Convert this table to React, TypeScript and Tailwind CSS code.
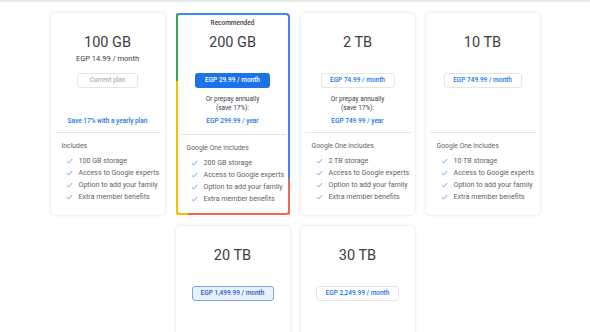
import React from "react";

type Plan = {
  size: string;
  price?: string;
  btn: string;
  variant: "current" | "primary" | "outline" | "hover";
  btnW: string;
  prepay?: string;
  save?: boolean;
  includes?: string;
  recommended?: boolean;
};

const Check = () => (
  <svg width="7" height="6" viewBox="0 0 7 6" className="shrink-0">
    <path d="M0.8 3.2 L2.6 4.9 L6.2 1" fill="none" stroke="#4285f4" strokeWidth="0.8" />
  </svg>
);

function Button({ p }: { p: Plan }) {
  const base =
    "h-[15px] rounded-[3px] flex items-center justify-center text-[6.5px] font-medium leading-none mx-auto";
  if (p.variant === "current")
    return <div className={`${base} ${p.btnW} border border-[#e3e5e8] text-[#b0b4b9] bg-white`}>{p.btn}</div>;
  if (p.variant === "primary")
    return <div className={`${base} ${p.btnW} bg-[#1a73e8] text-white`}>{p.btn}</div>;
  if (p.variant === "hover")
    return <div className={`${base} ${p.btnW} border border-[#7fa3e0] bg-[#e8f0fe] text-[#1a5fc8]`}>{p.btn}</div>;
  return <div className={`${base} ${p.btnW} border border-[#e3e5e8] text-[#1a73e8] bg-white`}>{p.btn}</div>;
}

function Card({ p, row2 }: { p: Plan; row2?: boolean }) {
  const features = p.includes
    ? [`${p.size} storage`, "Access to Google experts", "Option to add your family", "Extra member benefits"]
    : [];
  return (
    <div
      className={`relative w-[114px] rounded-[4px] bg-white border-2 flex flex-col ${
        p.recommended
          ? "border-t-[#4285f4] border-r-[#4285f4] border-b-[#ee675c] border-l-[#fbbc04] pb-[8px]"
          : "border-transparent shadow-[0_0_3px_rgba(0,0,0,0.16)] pb-[10px]"
      } ${row2 ? "h-[140px]" : ""}`}
    >
      {p.recommended && (
        <>
          <span className="absolute left-[-2px] top-[-2px] w-[2px] h-[68px] bg-[#34a853] rounded-tl-[4px]" />
          <span className="absolute right-[-2px] bottom-[-2px] w-[2px] h-[36px] bg-[#ee675c] rounded-br-[4px]" />
          <span className="absolute left-[-2px] bottom-[-2px] w-[12px] h-[2px] bg-[#fbbc04] rounded-bl-[4px]" />
        </>
      )}
      <div className={`h-[58px] flex flex-col items-center ${p.recommended ? "pt-[4px]" : "pt-[19px]"}`}>
        {p.recommended && (
          <div className="h-[8px] leading-[8px] text-[6.5px] font-medium text-[#3c4043]">Recommended</div>
        )}
        <div className={`text-[14.5px] leading-[18px] text-[#3c4043] ${p.recommended ? "mt-[7px]" : ""}`}>
          {p.size}
        </div>
        {p.price && <div className="mt-[2px] text-[7.5px] leading-[10px] text-[#3c4043]">{p.price}</div>}
      </div>
      <Button p={p} />
      {!row2 && (
        <>
          <div className="h-[44px] flex flex-col justify-end items-center pb-[6.5px] text-center">
            {p.prepay && (
              <>
                <div className="text-[6.5px] leading-[9px] text-[#3c4043]">Or prepay annually</div>
                <div className="text-[6.5px] leading-[9px] text-[#3c4043]">(save 17%):</div>
                <div className="mt-[4px] text-[6.5px] leading-[9px] font-medium text-[#1a73e8]">{p.prepay}</div>
              </>
            )}
            {p.save && (
              <div className="text-[6.5px] leading-[9px] font-medium text-[#1a73e8]">Save 17% with a yearly plan</div>
            )}
          </div>
          <div className={`h-px bg-[#e3e5e8] mx-[2px] ${p.recommended ? "mt-[2px]" : ""}`} />
          <div className="px-[9px]">
            <div className="mt-[9px] text-[6.8px] leading-[9px] text-[#5f6368]">{p.includes}</div>
            <div className="mt-[4px] flex flex-col">
              {features.map((f) => (
                <div key={f} className="h-[12px] flex items-center pl-[4px] gap-[6px] text-[7.1px] text-[#5f6368] whitespace-nowrap">
                  <Check />
                  <span>{f}</span>
                </div>
              ))}
            </div>
          </div>
        </>
      )}
    </div>
  );
}

const plans: Plan[] = [
  { size: "100 GB", price: "EGP 14.99 / month", btn: "Current plan", variant: "current", btnW: "w-[61px]", save: true, includes: "Includes" },
  { size: "200 GB", btn: "EGP 29.99 / month", variant: "primary", btnW: "w-[75px]", prepay: "EGP 299.99 / year", includes: "Google One includes", recommended: true },
  { size: "2 TB", btn: "EGP 74.99 / month", variant: "outline", btnW: "w-[74px]", prepay: "EGP 749.99 / year", includes: "Google One includes" },
  { size: "10 TB", btn: "EGP 749.99 / month", variant: "outline", btnW: "w-[78px]", includes: "Google One includes" },
];

const plans2: Plan[] = [
  { size: "20 TB", btn: "EGP 1,499.99 / month", variant: "hover", btnW: "w-[82px]" },
  { size: "30 TB", btn: "EGP 2,249.99 / month", variant: "outline", btnW: "w-[83px]" },
];

export default function App() {
  return (
    <div className="min-h-[332px] bg-white" style={{ fontFamily: "Roboto, 'Open Sans', Arial, sans-serif" }}>
      <div className="h-px bg-[#e6e6e6] shadow-[0_1px_2px_rgba(0,0,0,0.12)]" />
      <div className="pt-[12px] flex justify-center">
        <div className="w-[489px] flex flex-wrap justify-center gap-x-[11px] gap-y-[11px]">
          {plans.map((p) => (
            <Card key={p.size} p={p} />
          ))}
          {plans2.map((p) => (
            <Card key={p.size} p={p} row2 />
          ))}
        </div>
      </div>
    </div>
  );
}
